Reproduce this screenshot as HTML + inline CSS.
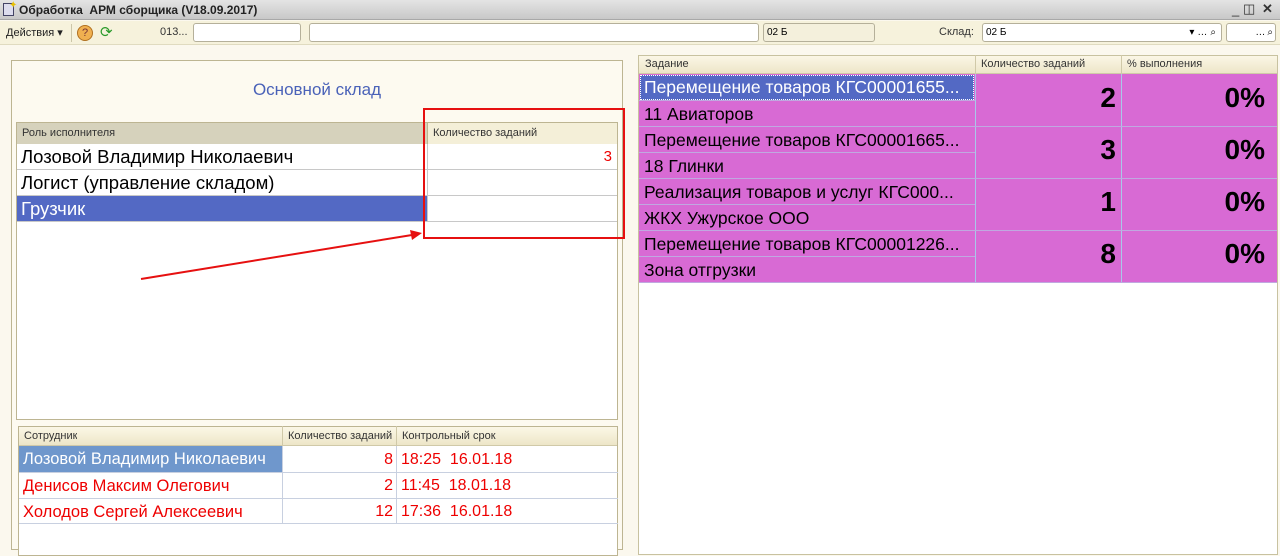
<!DOCTYPE html>
<html><head><meta charset="utf-8"><style>
body{margin:0;width:1280px;height:545px;overflow:hidden;background:#fbf8ee;font-family:"Liberation Sans",sans-serif;position:relative}
.a{position:absolute;box-sizing:border-box}
.t{white-space:nowrap;overflow:hidden}
.hd{font-size:11px;color:#333;line-height:20px;padding-left:5px}
.r{font-size:17.5px;line-height:26px;padding-left:4px}
</style></head><body>
<!-- title bar -->
<div class="a" style="left:0;top:0;width:1280px;height:20px;background:linear-gradient(#e4e4e4,#c8c8c8);border-bottom:1px solid #a8a8a8"></div>
<div class="a" style="left:3px;top:3px;width:11px;height:13px;border:1px solid #446;background:#dde"></div>
<div class="a" style="left:9px;top:0;color:#e8c000;font-size:10px">✦</div>
<div class="a t" style="left:19px;top:3px;font-size:12px;font-weight:bold;color:#222">Обработка&nbsp; АРМ сборщика (V18.09.2017)</div>
<div class="a" style="left:1232px;top:2px;font-size:13px;color:#333">_</div>
<div class="a" style="left:1243px;top:1px;font-size:13px;color:#333">◫</div>
<div class="a" style="left:1262px;top:1px;font-size:13px;color:#333;font-weight:bold">✕</div>
<!-- toolbar -->
<div class="a" style="left:0;top:21px;width:1280px;height:24px;background:#f6f2dc;border-bottom:1px solid #e0dbc0"></div>
<div class="a t" style="left:6px;top:26px;font-size:11px;color:#222">Действия ▾</div>
<div class="a" style="left:71px;top:24px;width:1px;height:18px;background:#ccc6a8"></div>
<div class="a" style="left:77px;top:25px;width:16px;height:16px;border-radius:50%;background:#f0b050;border:1px solid #b07020;font-size:11px;text-align:center;line-height:15px;color:#733">?</div>
<div class="a" style="left:100px;top:23px;font-size:15px;color:#2a9a2a">⟳</div>
<div class="a t" style="left:160px;top:26px;font-size:11px;color:#333">013...</div>
<div class="a" style="left:193px;top:23px;width:108px;height:19px;background:#fff;border:1px solid #b5b09a;border-radius:3px"></div>
<div class="a" style="left:309px;top:23px;width:450px;height:19px;background:#fff;border:1px solid #b5b09a;border-radius:3px"></div>
<div class="a t" style="left:763px;top:23px;width:112px;height:19px;background:#f4f0dc;border:1px solid #b5b09a;border-radius:3px;font-size:10px;line-height:17px;padding-left:3px">02 Б</div>
<div class="a t" style="left:939px;top:26px;font-size:11px;color:#333">Склад:</div>
<div class="a t" style="left:982px;top:23px;width:240px;height:19px;background:#fff;border:1px solid #b5b09a;border-radius:3px;font-size:10px;line-height:17px;padding-left:3px">02 Б<span style="position:absolute;right:2px;top:0;font-size:10px;letter-spacing:3px">▾…⌕</span></div>
<div class="a" style="left:1226px;top:23px;width:50px;height:19px;background:#fff;border:1px solid #b5b09a;border-radius:3px;font-size:10px;line-height:17px;text-align:right;letter-spacing:2px">…⌕</div>
<!-- left panel -->
<div class="a" style="left:11px;top:60px;width:612px;height:490px;border:1px solid #bdb592;background:#fdfaf0"></div>
<div class="a t" style="left:11px;top:80px;width:612px;text-align:center;font-size:17px;color:#4a62b8">Основной склад</div>
<div class="a" style="left:16px;top:122px;width:602px;height:298px;border:1px solid #bdb592;background:#fff"></div>
<div class="a t hd" style="left:17px;top:123px;width:410px;height:21px;background:#d6d2bc">Роль исполнителя</div>
<div class="a t hd" style="left:427px;top:123px;width:190px;height:21px;background:#f4efd8;border-left:1px solid #bdb592">Количество заданий</div>
<div class="a t r" style="left:17px;top:144px;width:410px;height:26px;border-bottom:1px solid #c8c8c8;font-size:18.5px">Лозовой Владимир Николаевич</div>
<div class="a t r" style="left:427px;top:144px;width:190px;height:26px;border-bottom:1px solid #c8c8c8;border-left:1px solid #c8c8c8;text-align:right;padding-right:5px;color:#e00;font-size:15px">3</div>
<div class="a t r" style="left:17px;top:170px;width:410px;height:26px;border-bottom:1px solid #c8c8c8;font-size:18.5px">Логист (управление складом)</div>
<div class="a" style="left:427px;top:170px;width:190px;height:26px;border-bottom:1px solid #c8c8c8;border-left:1px solid #c8c8c8"></div>
<div class="a t r" style="left:17px;top:196px;width:410px;height:26px;background:#5369c4;color:#fff;font-size:18.5px">Грузчик</div>
<div class="a" style="left:427px;top:196px;width:190px;height:26px;border-bottom:1px solid #c8c8c8;border-left:1px solid #c8c8c8"></div>
<div class="a" style="left:17px;top:221px;width:410px;height:1px;background:#c8c8c8"></div>
<!-- table 2 -->
<div class="a" style="left:18px;top:426px;width:600px;height:130px;border:1px solid #bdb592;background:#fff"></div>
<div class="a" style="left:19px;top:427px;width:598px;height:19px;background:linear-gradient(#fbf7e6,#ede6c8);border-bottom:1px solid #d0c9a8"></div>
<div class="a t hd" style="left:19px;top:426px">Сотрудник</div>
<div class="a t hd" style="left:282px;top:426px;border-left:1px solid #d0c9a8;height:20px">Количество заданий</div>
<div class="a t hd" style="left:396px;top:426px;border-left:1px solid #d0c9a8;height:20px">Контрольный срок</div>
<div class="a t r" style="left:19px;top:446px;width:263px;height:26px;background:#6f97cc;color:#fff;font-size:16.5px">Лозовой Владимир Николаевич</div>
<div class="a t r" style="left:19px;top:472px;width:263px;height:26px;color:#e00;border-top:1px solid #c8d0e0;font-size:16.5px">Денисов Максим Олегович</div>
<div class="a t r" style="left:19px;top:498px;width:263px;height:26px;color:#e00;border-top:1px solid #c8d0e0;border-bottom:1px solid #c8d0e0;font-size:16.5px">Холодов Сергей Алексеевич</div>
<div class="a" style="left:282px;top:446px;width:1px;height:78px;background:#c8d0e0"></div>
<div class="a" style="left:396px;top:446px;width:1px;height:78px;background:#c8d0e0"></div>
<div class="a" style="left:282px;top:472px;width:336px;height:1px;background:#c8d0e0"></div>
<div class="a" style="left:282px;top:498px;width:336px;height:1px;background:#c8d0e0"></div>
<div class="a" style="left:282px;top:523px;width:336px;height:1px;background:#c8d0e0"></div>
<div class="a t" style="left:282px;top:447px;width:111px;font-size:16px;color:#e00;text-align:right;line-height:26px">8<br>2<br>12</div>
<div class="a t" style="left:401px;top:447px;font-size:16px;line-height:26px;color:#e00">18:25&nbsp; 16.01.18<br>11:45&nbsp; 18.01.18<br>17:36&nbsp; 16.01.18</div>
<!-- red annotations -->
<div class="a" style="left:423px;top:108px;width:202px;height:131px;border:2px solid #e61010"></div>
<svg class="a" style="left:0;top:0" width="640" height="545"><line x1="141" y1="279" x2="412" y2="235" stroke="#e61010" stroke-width="2"/><polygon points="422,233 410,230 412,240" fill="#e61010"/></svg>
<!-- right panel -->
<div class="a" style="left:638px;top:55px;width:640px;height:500px;border:1px solid #c8c2a0;background:#fff"></div>
<div class="a" style="left:639px;top:56px;width:638px;height:18px;background:linear-gradient(#fbf7e6,#ede6c8);border-bottom:1px solid #d0c9a8"></div>
<div class="a t hd" style="left:640px;top:55px;line-height:19px">Задание</div>
<div class="a t hd" style="left:975px;top:55px;line-height:19px;border-left:1px solid #d0c9a8;height:19px">Количество заданий</div>
<div class="a t hd" style="left:1121px;top:55px;line-height:19px;border-left:1px solid #d0c9a8;height:19px">% выполнения</div>
<div class="a" style="left:639px;top:74px;width:638px;height:208px;background:#d86ad4"></div>
<div class="a" style="left:975px;top:74px;width:1px;height:208px;background:#a8c8e8"></div>
<div class="a" style="left:1121px;top:74px;width:1px;height:208px;background:#a8c8e8"></div>
<div class="a" style="left:639px;top:126px;width:638px;height:1px;background:#c0a8e0"></div>
<div class="a" style="left:639px;top:178px;width:638px;height:1px;background:#c0a8e0"></div>
<div class="a" style="left:639px;top:230px;width:638px;height:1px;background:#c0a8e0"></div>
<div class="a" style="left:639px;top:282px;width:638px;height:1px;background:#c0a8e0"></div>
<div class="a" style="left:639px;top:100px;width:336px;height:1px;background:#c0a8e0"></div>
<div class="a" style="left:639px;top:152px;width:336px;height:1px;background:#c0a8e0"></div>
<div class="a" style="left:639px;top:204px;width:336px;height:1px;background:#c0a8e0"></div>
<div class="a" style="left:639px;top:256px;width:336px;height:1px;background:#c0a8e0"></div>
<div class="a t r" style="left:640px;top:75px;width:334px;height:25px;background:#5369c4;color:#fff;outline:1px dotted #fff;outline-offset:-1px;line-height:25px">Перемещение товаров КГС00001655...</div>
<div class="a t r" style="left:640px;top:101px">11 Авиаторов</div>
<div class="a t r" style="left:640px;top:127px">Перемещение товаров КГС00001665...</div>
<div class="a t r" style="left:640px;top:153px">18 Глинки</div>
<div class="a t r" style="left:640px;top:179px">Реализация товаров и услуг КГС000...</div>
<div class="a t r" style="left:640px;top:205px">ЖКХ Ужурское ООО</div>
<div class="a t r" style="left:640px;top:231px">Перемещение товаров КГС00001226...</div>
<div class="a t r" style="left:640px;top:257px">Зона отгрузки</div>
<div class="a" style="left:976px;top:72px;width:140px;text-align:right;font-size:28px;font-weight:bold;line-height:52px">2<br>3<br>1<br>8</div>
<div class="a" style="left:1122px;top:72px;width:143px;text-align:right;font-size:28px;font-weight:bold;line-height:52px">0%<br>0%<br>0%<br>0%</div>
</body></html>
